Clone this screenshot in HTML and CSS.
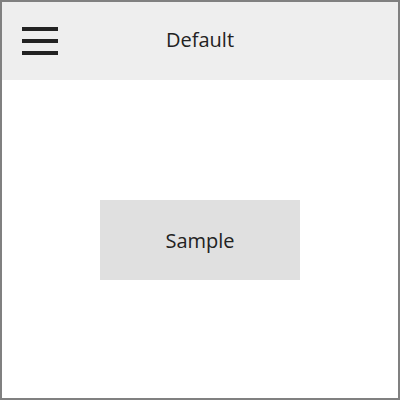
FILE: index.html
```html
<!DOCTYPE html>
<html>
<head>
<meta charset="utf-8">
<link rel="stylesheet" href="styles.css">
</head>
<body>
<div class="frame">
  <header class="bar">
    <div class="menu" aria-label="Menu">
      <span></span><span></span><span></span>
    </div>
    <div class="title">Default</div>
    <div class="spacer"></div>
  </header>
  <main class="content">
    <div class="sample">Sample</div>
  </main>
</div>
</body>
</html>
```
FILE: styles.css
```css
html, body {
  margin: 0;
  padding: 0;
  background: #fff;
}
.frame {
  width: 400px;
  height: 400px;
  box-sizing: border-box;
  border: 2px solid #808080;
  display: flex;
  flex-direction: column;
  font-family: "Open Sans", "DejaVu Sans", sans-serif;
  font-size: 20px;
  color: #222;
}
.bar {
  height: 78px;
  flex: none;
  background: #eeeeee;
  display: grid;
  grid-template-columns: 1fr auto 1fr;
  align-items: center;
  padding: 0 20px;
}
.menu {
  display: flex;
  flex-direction: column;
  gap: 8px;
  width: 36px;
}
.menu span {
  display: block;
  height: 4px;
  background: #222;
}
.title {
  line-height: 1;
  margin-top: -2px;
}
.content {
  flex: 1;
  display: flex;
  justify-content: center;
  padding-top: 120px;
}
.sample {
  width: 200px;
  height: 80px;
  background: #e0e0e0;
  display: flex;
  align-items: center;
  justify-content: center;
}
```
